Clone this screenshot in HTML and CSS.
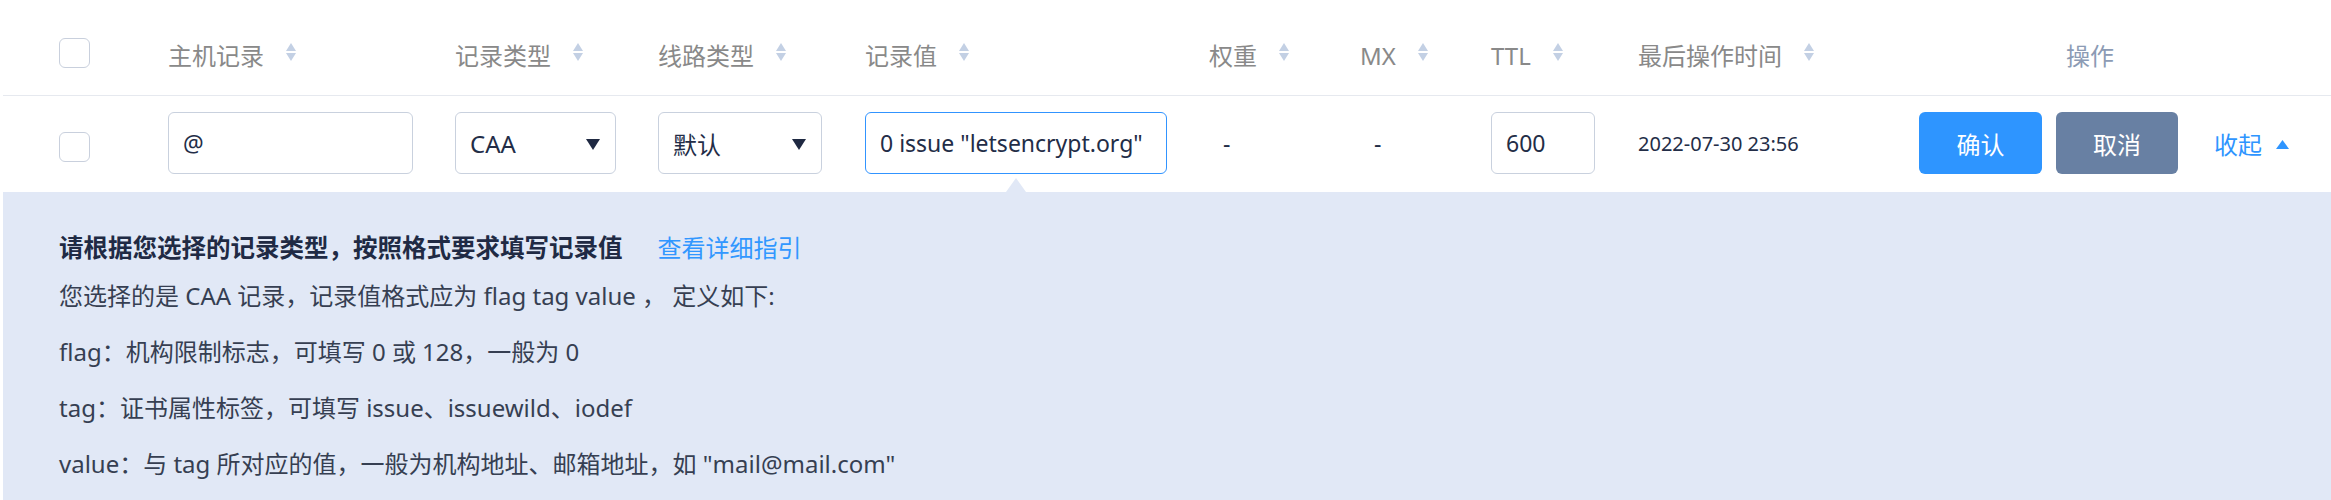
FILE: index.html
```html
<!DOCTYPE html>
<html lang="zh-CN">
<head>
<meta charset="utf-8">
<title>DNS 记录</title>
<link rel="stylesheet" href="styles.css">
</head>
<body>
<div class="table">
  <div class="thead">
    <div class="cell first"><span class="checkbox hcheck"></span></div>
    <div class="cell"><span class="th">主机记录</span><svg class="sort" viewBox="0 0 10 18" width="10" height="18"><path d="M5 0 10 8H0Z"/><path d="M0 10H10L5 18Z"/></svg></div>
    <div class="cell"><span class="th">记录类型</span><svg class="sort" viewBox="0 0 10 18" width="10" height="18"><path d="M5 0 10 8H0Z"/><path d="M0 10H10L5 18Z"/></svg></div>
    <div class="cell"><span class="th">线路类型</span><svg class="sort" viewBox="0 0 10 18" width="10" height="18"><path d="M5 0 10 8H0Z"/><path d="M0 10H10L5 18Z"/></svg></div>
    <div class="cell"><span class="th">记录值</span><svg class="sort" viewBox="0 0 10 18" width="10" height="18"><path d="M5 0 10 8H0Z"/><path d="M0 10H10L5 18Z"/></svg></div>
    <div class="cell"><span class="th">权重</span><svg class="sort" viewBox="0 0 10 18" width="10" height="18"><path d="M5 0 10 8H0Z"/><path d="M0 10H10L5 18Z"/></svg></div>
    <div class="cell"><span class="th">MX</span><svg class="sort" viewBox="0 0 10 18" width="10" height="18"><path d="M5 0 10 8H0Z"/><path d="M0 10H10L5 18Z"/></svg></div>
    <div class="cell"><span class="th">TTL</span><svg class="sort" viewBox="0 0 10 18" width="10" height="18"><path d="M5 0 10 8H0Z"/><path d="M0 10H10L5 18Z"/></svg></div>
    <div class="cell"><span class="th">最后操作时间</span><svg class="sort" viewBox="0 0 10 18" width="10" height="18"><path d="M5 0 10 8H0Z"/><path d="M0 10H10L5 18Z"/></svg></div>
    <div class="cell ops-head"><span class="th th-ops">操作</span></div>
  </div>

  <div class="trow">
    <div class="cell first"><span class="checkbox rcheck"></span></div>
    <div class="cell"><div class="field w-host">@</div></div>
    <div class="cell"><div class="field select w-type">CAA<svg class="caret" viewBox="0 0 14 11" width="14" height="11"><path d="M0 0H14L7 11Z"/></svg></div></div>
    <div class="cell"><div class="field select w-line">默认<svg class="caret" viewBox="0 0 14 11" width="14" height="11"><path d="M0 0H14L7 11Z"/></svg></div></div>
    <div class="cell"><div class="field focus w-value">0 issue "letsencrypt.org"</div></div>
    <div class="cell dash">-</div>
    <div class="cell dash">-</div>
    <div class="cell"><div class="field w-ttl">600</div></div>
    <div class="cell date">2022-07-30 23:56</div>
    <div class="cell ops">
      <button class="btn primary">确认</button>
      <button class="btn secondary">取消</button>
      <a class="collapse">收起<svg class="up" viewBox="0 0 13 9" width="13" height="9"><path d="M6.5 0 13 9H0Z"/></svg></a>
    </div>
  </div>

  <div class="panel">
    <div class="panel-title"><span class="strong">请根据您选择的记录类型，按照格式要求填写记录值</span><a class="guide">查看详细指引</a></div>
    <p class="line intro">您选择的是 CAA 记录，记录值格式应为 flag tag value ， 定义如下:</p>
    <p class="line">flag：机构限制标志，可填写 0 或 128，一般为 0</p>
    <p class="line">tag：证书属性标签，可填写 issue、issuewild、iodef</p>
    <p class="line">value：与 tag 所对应的值，一般为机构地址、邮箱地址，如 "mail@mail.com"</p>
  </div>
</div>
</body>
</html>
```

FILE: styles.css
```css
* { box-sizing: border-box; }

html, body {
  margin: 0;
  padding: 0;
  background: #ffffff;
}

body {
  font-family: "Noto Sans", "Noto Sans CJK SC", sans-serif;
  font-size: 24px;
  color: #232d47;
}

.table {
  padding-left: 3px;
}

.thead,
.trow {
  display: grid;
  grid-template-columns: 144px 287px 203px 207px 344px 151px 131px 147px 281px 1fr;
  align-items: center;
}

.thead {
  height: 96px;
  padding-top: 17px;
  border-bottom: 1px solid #e6e9ef;
}

.trow {
  height: 96px;
  padding-bottom: 2px;
}

.cell {
  display: flex;
  align-items: center;
  padding-left: 21px;
  min-width: 0;
}

.cell.first {
  padding-left: 56px;
}

.th {
  color: #898989;
  line-height: 32px;
  white-space: nowrap;
}

.th-ops {
  color: #8c9bb4;
}

.ops-head {
  padding-left: 168px;
}

.sort {
  margin-left: 22px;
  margin-bottom: 8px;
  fill: #c3d0e4;
  flex: none;
}

.checkbox {
  display: block;
  width: 31px;
  height: 30px;
  border: 1px solid #c9d0dd;
  border-radius: 6px;
  background: #fff;
}

.hcheck { margin-bottom: 6px; }
.rcheck { margin-top: 7px; }

.field {
  height: 62px;
  border: 1px solid #c9d1de;
  border-radius: 6px;
  background: #fff;
  display: flex;
  align-items: center;
  padding-left: 14px;
  font-size: 23px;
  color: #232d47;
  white-space: nowrap;
}

.field.focus {
  border-color: #3194ff;
  position: relative;
}

.field.focus::after {
  content: "";
  position: absolute;
  left: 50%;
  bottom: -19px;
  margin-left: -10px;
  border-left: 10px solid transparent;
  border-right: 10px solid transparent;
  border-bottom: 14px solid #e1e8f6;
}

.select {
  justify-content: space-between;
  padding-right: 15px;
  font-size: 24px;
}

.caret {
  fill: #1f2942;
  margin-top: 2px;
}

.w-host { width: 245px; }
.w-type { width: 161px; }
.w-line { width: 164px; }
.w-value { width: 302px; }
.w-ttl { width: 104px; }

.dash {
  padding-left: 35px;
  color: #232d47;
  font-size: 23px;
}

.date {
  font-size: 20px;
  color: #232d47;
  white-space: nowrap;
}

.btn {
  height: 62px;
  border: none;
  border-radius: 6px;
  color: #fff;
  font-family: "Noto Sans CJK SC", sans-serif;
  font-size: 24px;
  padding: 0;
  cursor: pointer;
}

.btn.primary {
  width: 123px;
  background: #2e95ff;
}

.btn.secondary {
  width: 122px;
  margin-left: 14px;
  background: #6880a3;
}

.collapse {
  margin-left: 36px;
  color: #2e95ff;
  display: flex;
  align-items: center;
  white-space: nowrap;
  cursor: pointer;
}

.up {
  fill: #2e95ff;
  margin-left: 14px;
  margin-top: 2px;
}

.panel {
  background: #e1e8f6;
  padding: 38px 56px 40px;
}

.panel-title {
  line-height: 36px;
  white-space: nowrap;
}

.strong {
  font-weight: 700;
  font-size: 24.5px;
  color: #202a44;
}

.guide {
  margin-left: 35px;
  color: #3197ff;
}

.line {
  margin: 20px 0 0;
  line-height: 36px;
  color: #363f52;
  white-space: nowrap;
}

.line.intro {
  margin-top: 12px;
}
```
